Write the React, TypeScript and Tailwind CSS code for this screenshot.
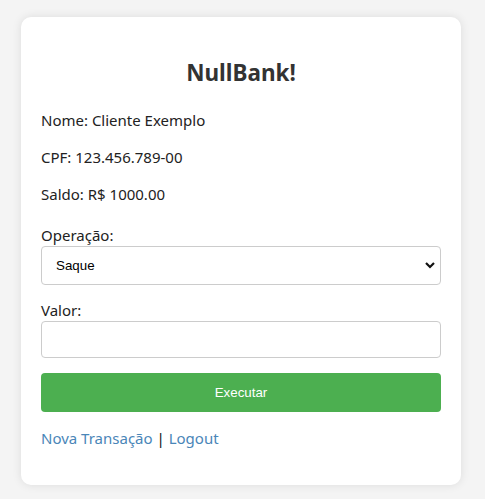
import React from "react";

export default function App() {
  return (
    <div className="min-h-[499px] w-full bg-[#f4f4f4] pt-[17px] pb-[15px]" style={{ fontFamily: '"Noto Sans", "Open Sans", sans-serif' }}>
      <div className="mx-[21px] w-[440px] rounded-[10px] bg-white p-5 shadow-[0_0_10px_rgba(0,0,0,0.1)] text-[#222]">
        <h2 className="mt-5 mb-[21px] text-center text-[22.5px] leading-[32px] font-bold text-[#333]">NullBank!</h2>
        <p className="my-4 text-[15px] leading-[21px]">Nome: Cliente Exemplo</p>
        <p className="my-4 text-[15px] leading-[21px]">CPF: 123.456.789-00</p>
        <p className="mt-4 mb-0 text-[15px] leading-[21px]">Saldo: R$ 1000.00</p>
        <div className="mt-[20px]">
          <label className="block text-[15px] leading-[21px]">Operação:</label>
          <div className="relative">
            <select className="block h-[39px] w-full appearance-none rounded-[4px] border border-[#ccc] bg-white pl-[14px] text-[13.33px] text-black outline-none" style={{ fontFamily: '"Liberation Sans", Arial, sans-serif' }} defaultValue="Saque">
              <option>Saque</option>
              <option>Depósito</option>
            </select>
            <svg className="pointer-events-none absolute right-[5px] top-[15px]" width="12" height="9" viewBox="0 0 12 9">
              <path d="M2 2 L6 6 L10 2" fill="none" stroke="#111" strokeWidth="2.2" />
            </svg>
          </div>
        </div>
        <div className="mt-[15px]">
          <label className="block text-[15px] leading-[21px]">Valor:</label>
          <input type="text" className="block h-[37px] w-full rounded-[4px] border border-[#ccc] bg-white px-2 outline-none" />
        </div>
        <button className="mt-[15px] block h-[39px] w-full rounded-[4px] bg-[#4caf50] text-[13.33px] text-white" style={{ fontFamily: '"Liberation Sans", Arial, sans-serif' }}>
          Executar
        </button>
        <p className="mt-4 mb-4 text-[15px] leading-[21px] text-[#111]">
          <a href="#" className="text-[#4a86b8]">Nova Transação</a> | <a href="#" className="text-[#4a86b8]">Logout</a>
        </p>
      </div>
    </div>
  );
}
